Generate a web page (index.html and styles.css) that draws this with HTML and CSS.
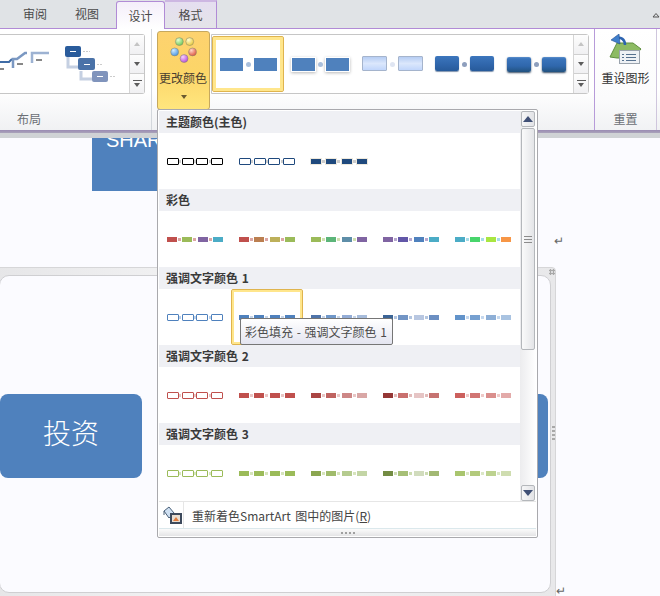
FILE: index.html
```html
<!DOCTYPE html>
<html lang="zh-CN">
<head>
<meta charset="utf-8">
<title>SmartArt 更改颜色</title>
<link rel="stylesheet" href="styles.css">
</head>
<body>
<div class="app">
  <nav class="tabs">
    <span class="tab">审阅</span>
    <span class="tab">视图</span>
    <span class="tab tab-active">设计</span>
    <span class="tab tab-context">格式</span>
    <svg class="collapse" width="8" height="6" viewBox="0 0 8 6"><path d="M1 5 L4 1.5 L7 5 Z" fill="none" stroke="#555"/></svg>
  </nav>

  <section class="ribbon">
    <div class="group group-layout">
      <div class="group-main">
        <div class="gallery gallery-layout">
          <svg class="layout-thumbs" width="129" height="58" viewBox="0 35 129 58">
            <path d="M0 62H9L12 59" fill="none" stroke="#3f6ca6" stroke-width="2"/>
            <path d="M13 68V59H17L25 53H27" fill="none" stroke="#7b98c2" stroke-width="2.5"/>
            <path d="M32 63V53H49" fill="none" stroke="#9db2d2" stroke-width="2.5"/>
            <path d="M0 69H4M17 64H23M36 60H42" stroke="#111" stroke-width="1"/>
            <path d="M68 57V67H78M81 71V79H92" fill="none" stroke="#c5d0e2" stroke-width="3"/>
            <rect class="lt-a" x="65" y="46" width="16" height="11" rx="2"/>
            <rect class="lt-b" x="78" y="58" width="17" height="12" rx="2"/>
            <rect class="lt-c" x="92" y="71" width="16" height="11" rx="2"/>
            <path d="M70 51.500H76M84 64.500H90M97 76.500H103" stroke="#fff" stroke-width="1"/>
            <path d="M83 51.500H90M97 64.500H102M110 76.500H116" stroke="#ccc" stroke-dasharray="2 1"/>
          </svg>
          <div class="spin">
            <span class="spin-btn"><i class="tri-up tri-off"></i></span>
            <span class="spin-btn"><i class="tri-down"></i></span>
            <span class="spin-btn spin-more"><i class="more-bar"></i><i class="tri-down"></i></span>
          </div>
        </div>
      </div>
      <div class="group-label">布局</div>
    </div>

    <div class="group group-style">
      <div class="group-main main-style">
        <button class="color-btn">
          <svg class="balls" width="34" height="34" viewBox="0 0 34 34">
            <defs>
              <radialGradient id="bg" cx=".35" cy=".3" r=".8"><stop offset="0" stop-color="#e6ffd0"/><stop offset="1" stop-color="#62c24a"/></radialGradient>
              <radialGradient id="by" cx=".35" cy=".3" r=".8"><stop offset="0" stop-color="#fffbd0"/><stop offset="1" stop-color="#e6c52e"/></radialGradient>
              <radialGradient id="bb" cx=".35" cy=".3" r=".8"><stop offset="0" stop-color="#d0ecff"/><stop offset="1" stop-color="#3d8ee0"/></radialGradient>
              <radialGradient id="br" cx=".35" cy=".3" r=".8"><stop offset="0" stop-color="#ffd6c8"/><stop offset="1" stop-color="#dd4a33"/></radialGradient>
              <radialGradient id="bm" cx=".35" cy=".3" r=".8"><stop offset="0" stop-color="#f6d0ff"/><stop offset="1" stop-color="#b13fd6"/></radialGradient>
            </defs>
            <circle cx="11" cy="7" r="4.200" fill="url(#bg)" stroke="#8a8a70" stroke-width=".6"/>
            <circle cx="22" cy="7" r="4.200" fill="url(#by)" stroke="#8a8a70" stroke-width=".6"/>
            <circle cx="6" cy="18" r="4.200" fill="url(#bb)" stroke="#8a8a70" stroke-width=".6"/>
            <circle cx="25" cy="18" r="4.200" fill="url(#br)" stroke="#8a8a70" stroke-width=".6"/>
            <circle cx="16" cy="25" r="4.200" fill="url(#bm)" stroke="#8a8a70" stroke-width=".6"/>
          </svg>
          <span class="btn-text">更改颜色</span>
          <i class="tri-down tri-dark"></i>
        </button>
        <div class="gallery gallery-style">
          <div class="style-cells">
            <div class="style-cell style-selected"><i class="tb t-flat"></i><b class="td"></b><i class="tb t-flat"></i></div>
            <div class="style-cell"><i class="tb t-raised"></i><b class="td"></b><i class="tb t-raised"></i></div>
            <div class="style-cell"><i class="tb t-light"></i><b class="td td-pale"></b><i class="tb t-light"></i></div>
            <div class="style-cell"><i class="tb t-dark"></i><b class="td td-mid"></b><i class="tb t-dark"></i></div>
            <div class="style-cell"><i class="tb t-deep"></i><b class="td td-mid"></b><i class="tb t-deep"></i></div>
          </div>
          <div class="spin">
            <span class="spin-btn"><i class="tri-up tri-off"></i></span>
            <span class="spin-btn"><i class="tri-down"></i></span>
            <span class="spin-btn spin-more"><i class="more-bar"></i><i class="tri-down"></i></span>
          </div>
        </div>
      </div>
      <div class="group-label"></div>
    </div>

    <div class="group group-reset">
      <div class="group-main main-reset">
        <svg class="reset-icon" width="36" height="32" viewBox="0 0 36 32">
          <path d="M2 23L9 9H25L33 15L25 24H9Z" fill="#8dbb63" stroke="#5f8f3e" stroke-linejoin="round"/>
          <rect x="11.500" y="16.500" width="20" height="13" fill="#eef1f5" stroke="#9aa3ad"/>
          <path d="M18 20.500H28M18 23.500H28M18 26.500H28M14 20.500H16M14 23.500H16M14 26.500H16" stroke="#56718f"/>
          <path d="M17 11C17 5 13 3 8 4" fill="none" stroke="#2c63b0" stroke-width="2.500"/>
          <path d="M3 6L11 0L12 10Z" fill="#3f7fcc" stroke="#234f90" stroke-width=".6"/>
        </svg>
        <span class="reset-text">重设图形</span>
      </div>
      <div class="group-label">重置</div>
    </div>
  </section>
  <div class="ribbon-edge"></div>

  <main class="doc">
    <div class="shape-top"><span>SHAR</span></div>
    <div class="para-mark para-left">↵</div>
    <div class="frame">
      <div class="frame-inner">
        <div class="node node-left">投资</div>
        <div class="node node-right"></div>
      </div>
      <i class="frame-corner"></i>
      <i class="frame-grip"></i>
    </div>
    <span class="mark mark-mid">↵</span>
    <span class="mark mark-low">↵</span>
  </main>

  <aside class="dropdown">
    <div class="dd-body">
      <div class="dd-list">
        <h4 class="dd-head">主题颜色(主色)</h4>
        <div class="dd-row">
          <div class="cell"><div class="sw out g-black"><i></i><b></b><i></i><b></b><i></i><b></b><i></i></div></div>
          <div class="cell"><div class="sw out g-navy"><i></i><b></b><i></i><b></b><i></i><b></b><i></i></div></div>
          <div class="cell"><div class="sw g-navyfill"><i></i><b></b><i></i><b></b><i></i><b></b><i></i></div></div>
        </div>
        <h4 class="dd-head">彩色</h4>
        <div class="dd-row">
          <div class="cell"><div class="sw g-c1"><i></i><b></b><i></i><b></b><i></i><b></b><i></i></div></div>
          <div class="cell"><div class="sw g-c2"><i></i><b></b><i></i><b></b><i></i><b></b><i></i></div></div>
          <div class="cell"><div class="sw g-c3"><i></i><b></b><i></i><b></b><i></i><b></b><i></i></div></div>
          <div class="cell"><div class="sw g-c4"><i></i><b></b><i></i><b></b><i></i><b></b><i></i></div></div>
          <div class="cell"><div class="sw g-c5"><i></i><b></b><i></i><b></b><i></i><b></b><i></i></div></div>
        </div>
        <h4 class="dd-head">强调文字颜色 1</h4>
        <div class="dd-row">
          <div class="cell"><div class="sw out g-b0"><i></i><b></b><i></i><b></b><i></i><b></b><i></i></div></div>
          <div class="cell cell-selected"><div class="sw g-b1"><i></i><b></b><i></i><b></b><i></i><b></b><i></i></div></div>
          <div class="cell"><div class="sw g-b2"><i></i><b></b><i></i><b></b><i></i><b></b><i></i></div></div>
          <div class="cell"><div class="sw g-b3"><i></i><b></b><i></i><b></b><i></i><b></b><i></i></div></div>
          <div class="cell"><div class="sw g-b4"><i></i><b></b><i></i><b></b><i></i><b></b><i></i></div></div>
        </div>
        <h4 class="dd-head">强调文字颜色 2</h4>
        <div class="dd-row">
          <div class="cell"><div class="sw out g-r0"><i></i><b></b><i></i><b></b><i></i><b></b><i></i></div></div>
          <div class="cell"><div class="sw g-r1"><i></i><b></b><i></i><b></b><i></i><b></b><i></i></div></div>
          <div class="cell"><div class="sw g-r2"><i></i><b></b><i></i><b></b><i></i><b></b><i></i></div></div>
          <div class="cell"><div class="sw g-r3"><i></i><b></b><i></i><b></b><i></i><b></b><i></i></div></div>
          <div class="cell"><div class="sw g-r4"><i></i><b></b><i></i><b></b><i></i><b></b><i></i></div></div>
        </div>
        <h4 class="dd-head">强调文字颜色 3</h4>
        <div class="dd-row">
          <div class="cell"><div class="sw out g-o0"><i></i><b></b><i></i><b></b><i></i><b></b><i></i></div></div>
          <div class="cell"><div class="sw g-o1"><i></i><b></b><i></i><b></b><i></i><b></b><i></i></div></div>
          <div class="cell"><div class="sw g-o2"><i></i><b></b><i></i><b></b><i></i><b></b><i></i></div></div>
          <div class="cell"><div class="sw g-o3"><i></i><b></b><i></i><b></b><i></i><b></b><i></i></div></div>
          <div class="cell"><div class="sw g-o4"><i></i><b></b><i></i><b></b><i></i><b></b><i></i></div></div>
        </div>
      </div>
      <div class="dd-scroll">
        <span class="sb-btn"><i class="sb-up"></i></span>
        <span class="sb-thumb"><i class="grip"></i></span>
        <span class="sb-track"></span>
        <span class="sb-btn"><i class="sb-down"></i></span>
      </div>
    </div>
    <div class="dd-foot">
      <span class="foot-icon">
        <svg width="20" height="20" viewBox="0 0 20 20">
          <path d="M2 6L7 2L12 8L7 13Z" fill="#cfe0f2" stroke="#4a6078"/>
          <path d="M2 6V10" stroke="#4a6078"/>
          <rect x="8" y="8" width="12" height="11" fill="#3d4a5c"/>
          <rect x="10" y="10" width="8" height="7" fill="#e8ddd0"/>
          <path d="M11 16L14 12L17 16Z" fill="#e07b3c"/>
        </svg>
      </span>
      <span class="foot-text">重新着色SmartArt 图中的图片(<u>R</u>)</span>
    </div>
    <div class="dd-grip"><i></i><i></i><i></i><i></i></div>
  </aside>

  <div class="tooltip">彩色填充 - 强调文字颜色 1</div>
</div>
</body>
</html>
```
FILE: styles.css
```css
* { box-sizing: border-box; }
html, body { margin: 0; padding: 0; }
body {
  width: 660px;
  height: 596px;
  overflow: hidden;
  font-family: "Noto Sans CJK SC", "Liberation Sans", sans-serif;
  font-size: 12px;
  color: #444;
  background: #fbfbff;
}
.app { position: relative; width: 660px; height: 596px; overflow: hidden; }

/* tabs */
.tabs {
  position: relative;
  display: flex;
  height: 29px;
  padding-left: 9px;
  background: #e0e3e6;
  border-bottom: 1px solid #b18bd6;
}
.tab {
  width: 52px;
  line-height: 28px;
  text-align: center;
  color: #4a4a4a;
}
.tab-active {
  width: 49px;
  margin-left: 3px;
  margin-top: 1px;
  margin-bottom: -1px;
  line-height: 27px;
  border: 1px solid #b18bd6;
  border-bottom: 0;
  border-radius: 3px 3px 0 0;
  background: linear-gradient(#f4eefa, #ffffff);
}
.tab-context {
  width: 52px;
  border-right: 1px solid #b18bd6;
  border-top: 2px solid #cdb7e2;
  line-height: 25px;
  background: linear-gradient(#e5def0, #e4e4e8);
}
.collapse { position: absolute; right: 0; top: 12px; }

/* ribbon */
.ribbon {
  display: flex;
  height: 101px;
  background: linear-gradient(#ffffff 0, #ffffff 60%, #f0f1f3 100%);
}
.ribbon-edge {
  height: 8px;
  background: linear-gradient(#9a8bb3 0, #a9a2b9 3px, #cfd2d5 3px, #cfd2d5 100%);
}
.group { display: flex; flex-direction: column; border-right: 1px solid #d3d7dc; }
.group-layout { width: 152px; }
.group-style { width: 443px; border-right-color: #b79bd9; }
.group-reset { width: 62px; border-right-color: #cfc6dd; }
.group-main { height: 79px; flex: none; }
.group-label {
  flex: 1;
  text-align: center;
  line-height: 22px;
  padding-top: 0;
  color: #6b6f75;
}
.group-layout .group-label { width: 58px; }
.gallery {
  display: flex;
  height: 60px;
  margin-top: 5px;
  background: #fff;
  border: 1px solid #c6c6c6;
  border-radius: 0 3px 3px 0;
}
.gallery-layout { width: 145px; border-left: 0; justify-content: space-between; }
.lt-a { fill: #2a5c9c; }
.lt-b { fill: #4a72a8; }
.lt-c { fill: #8094bc; }
.spin { display: flex; flex-direction: column; width: 15px; border-left: 1px solid #d5d5d5; }
.spin-btn {
  flex: 1;
  display: flex;
  flex-direction: column;
  align-items: center;
  justify-content: center;
  gap: 2px;
  background: linear-gradient(#fdfdfd, #f0f0f2);
  border-bottom: 1px solid #cfcfcf;
}
.spin-btn:last-child { border-bottom: 0; }
.tri-up, .tri-down { display: block; width: 0; height: 0; border-left: 3.500px solid transparent; border-right: 3.500px solid transparent; }
.tri-up { border-bottom: 4px solid #5c5c5c; }
.tri-off { border-bottom-color: #c4c4c4; }
.tri-down { border-top: 4px solid #5c5c5c; }
.more-bar { display: block; width: 9px; height: 1px; background: #5c5c5c; }

.main-style { display: flex; align-items: flex-start; padding-left: 5px; }
.color-btn {
  flex: none;
  display: flex;
  flex-direction: column;
  align-items: center;
  width: 53px;
  height: 79px;
  margin-top: 2px;
  padding: 3px 0 0;
  font: inherit;
  color: #4a4030;
  background: linear-gradient(#fdd26f 0, #fcd568 50%, #ffe67e 100%);
  border: 1px solid #c6a85e;
  border-radius: 3px;
}
.balls { display: block; margin-bottom: 0; margin-left: 2px; height: 32px; }
.btn-text { line-height: 18px; white-space: nowrap; margin-top: 2px; margin-left: -1px; }
.color-btn .tri-dark { margin-top: 8px; border-top-color: #6a5a30; }
.gallery-style { width: 378px; margin-left: 1px; border-left: 1px solid #c6c6c6; }
.style-cells { flex: 1; display: flex; }
.style-cell {
  position: relative;
  width: 72px;
  height: 56px;
  margin-top: 1px;
  flex: none;
  display: flex;
  align-items: center;
  justify-content: center;
  gap: 3px;
}
.style-selected { border: 1px solid #dfb44e; box-shadow: inset 0 0 0 3px #ffe68c; border-radius: 2px; }
.tb { display: block; width: 23px; height: 13px; background: #4f81bd; }
.td { display: block; width: 5px; height: 5px; border-radius: 50%; background: #a9bfdc; }
.td-pale { background: #dfe5f2; }
.td-mid { background: #8e9fbd; }
.t-raised { box-shadow: 0 0 0 1px #fff, 0 1px 3px 1px #b9b9b9; }
.t-light { background: linear-gradient(#b6cdf3, #dbe7fc 50%, #c1d6fb); border: 1px solid #a5b4cc; height: 15px; width: 25px; border-radius: 1px; margin-top: -1px; }
.t-dark { background: linear-gradient(#3c76bd, #2f65aa 60%, #275a9a); height: 15px; width: 24px; border-radius: 2px; box-shadow: 0 1px 1px #7f93ad; margin-top: -2px; }
.t-deep { background: linear-gradient(#5b8fcc 0, #3a74bb 12%, #2f67ac 60%, #22527f 100%); height: 15px; width: 24px; border-radius: 2px; box-shadow: 0 1px 2px #3c4f66; }

.main-reset { display: flex; flex-direction: column; align-items: center; padding-top: 5px; }
.reset-icon { display: block; }
.reset-text { line-height: 18px; margin-top: 3px; color: #333; }
.group-reset { background: linear-gradient(#ffffff 0, #fbfbfc 70%, #f1f2f4 100%); }

/* document */
.doc { position: relative; height: 458px; overflow: visible; }
.shape-top {
  width: 65px;
  height: 53px;
  margin-left: 92px;
  overflow: hidden;
  background: #4f81bd;
  color: #fff;
  font-family: "Liberation Sans", sans-serif;
  font-size: 20px;
  line-height: 20px;
  padding-left: 14px;
  white-space: nowrap;
}
.shape-top span { display: block; margin-top: -8px; }
.para-mark { height: 76px; padding-top: 57px; font-size: 11px; line-height: 12px; color: #777; margin-left: -8px; }
.frame {
  position: relative;
  width: 562px;
  height: 340px;
  margin-left: -6px;
  padding: 7px 4px 0;
  border: 1px solid #d6d6d8;
  border-radius: 4px;
  background: linear-gradient(90deg, #e6e6e8, #f4f4f5 40%, #e8e8ea);
}
.frame-inner {
  display: flex;
  justify-content: space-between;
  align-items: flex-start;
  height: 318px;
  padding-top: 118px;
  padding-right: 2px;
  background: #fbfbff;
  border: 1px solid #cfcfd2;
  border-radius: 10px;
}
.frame-corner {
  position: absolute;
  right: 0;
  top: 1px;
  width: 6px;
  height: 6px;
  background: radial-gradient(circle, #a8a8a8 1px, transparent 1.500px) 0 0 / 3px 3px;
}
.frame-grip {
  position: absolute;
  right: 0;
  top: 158px;
  width: 3px;
  height: 15px;
  background: repeating-linear-gradient(#a8a8a8 0, #a8a8a8 2px, transparent 2px, transparent 4px);
}
.node { height: 84px; background: #4f81bd; }
.node-left {
  width: 142px;
  border-radius: 8px;
  color: #fff;
  font-size: 28px;
  font-weight: 300;
  line-height: 76px;
  text-align: center;
}
.node-right { width: 40px; border-radius: 8px; }
.mark { position: absolute; color: #666; font-size: 12px; line-height: 12px; }
.mark-mid { left: 554px; top: 96px; }
.mark-low { left: 556px; top: 446px; }

/* dropdown */
.dropdown {
  position: absolute;
  left: 157px;
  top: 109px;
  display: flex;
  flex-direction: column;
  width: 381px;
  height: 429px;
  padding: 1px;
  background: #fff;
  border: 1px solid #a9a9ad;
  border-radius: 2px;
}
.dd-body { display: flex; height: 390px; flex: none; }
.dd-list { width: 361px; flex: none; }
.dd-head {
  height: 22px;
  margin: 0;
  padding-left: 7px;
  font-size: 12px;
  font-weight: 700;
  line-height: 22px;
  word-spacing: 1px;
  color: #3a3a3a;
  background: #eff0f4;
}
.dd-row { display: flex; height: 56px; }
.cell { width: 72px; height: 56px; flex: none; display: flex; align-items: center; justify-content: center; }
.cell-selected { border: 1px solid #dfb44e; box-shadow: inset 0 0 0 2px #ffe68c; border-radius: 2px; }
.sw { width: 56px; display: flex; align-items: center; justify-content: space-between; }
.sw i { display: block; width: 10px; height: 5px; }
.sw b { display: block; width: 3px; height: 3px; }
.sw i:nth-of-type(1) { background: var(--a); }
.sw i:nth-of-type(2) { background: var(--b); }
.sw i:nth-of-type(3) { background: var(--c); }
.sw i:nth-of-type(4) { background: var(--d); }
.sw b { background: var(--l, #ccc); }
.sw.out i { width: 12px; height: 7px; background: #fff; border: 1px solid var(--e); border-radius: 1px; }
.sw.out b { width: 2px; }
.g-black { --e: #000; --l: #ccc; }
.g-navy { --e: #1f497d; --l: #ccc; }
.g-navyfill { --a: #1f497d; --b: #1f497d; --c: #1f497d; --d: #1f497d; --l: #ccc; }
.g-navyfill i { outline: 1px solid #eee9dd; }
.g-c1 { --a: #c0504d; --b: #9bbb59; --c: #8064a2; --d: #4bacc6; --l: #dca6a4; }
.g-c2 { --a: #c0504d; --b: #bb7f50; --c: #bdb05a; --d: #9bbb59; --l: #dca6a4; }
.g-c3 { --a: #9bbb59; --b: #5cb579; --c: #5e8ea8; --d: #8064a2; --l: #cfe0b0; }
.g-c4 { --a: #8064a2; --b: #6257a8; --c: #4f81bd; --d: #4bacc6; --l: #b8a8d0; }
.g-c5 { --a: #4bacc6; --b: #48d56c; --c: #a9e641; --d: #f79646; --l: #a5dce8; }
.g-b0 { --e: #4f81bd; --l: #bcd0e8; }
.g-b1 { --a: #4f81bd; --b: #4f81bd; --c: #4f81bd; --d: #4f81bd; --l: #c5d4e8; }
.g-b2 { --a: #4f74aa; --b: #6f97c9; --c: #93acd6; --d: #a7bcdb; --l: #c5d4e8; }
.g-b3 { --a: #3b6496; --b: #7295c5; --c: #b8c7e1; --d: #6c8fc2; --l: #b4c6e0; }
.g-b4 { --a: #6293ca; --b: #76a0d0; --c: #8eafd6; --d: #a9c3e1; --l: #c5d8ee; }
.g-r0 { --e: #c0504d; --l: #e6c3c2; }
.g-r1 { --a: #c0504d; --b: #c0504d; --c: #c0504d; --d: #c0504d; --l: #e8c6c5; }
.g-r2 { --a: #aa4543; --b: #bf6360; --c: #cd8786; --d: #d9a7a6; --l: #e8c6c5; }
.g-r3 { --a: #953735; --b: #c9706e; --c: #e6c5c5; --d: #c67371; --l: #e2bcbb; }
.g-r4 { --a: #cc605d; --b: #d17573; --c: #da8f8d; --d: #e3aaa9; --l: #eec9c8; }
.g-o0 { --e: #9bbb59; --l: #d6e4bc; }
.g-o1 { --a: #9bbb59; --b: #9bbb59; --c: #9bbb59; --d: #9bbb59; --l: #d6e4bc; }
.g-o2 { --a: #8ba650; --b: #a0bb6b; --c: #b5cb8f; --d: #c3d5a5; --l: #d6e4bc; }
.g-o3 { --a: #738c43; --b: #a6bf76; --c: #d1dcbd; --d: #a2b873; --l: #cddcb2; }
.g-o4 { --a: #a9c56e; --b: #b3ca7c; --c: #bdd28f; --d: #cfddb0; --l: #dbe7c6; }

.dd-scroll {
  flex: 1;
  display: flex;
  flex-direction: column;
  padding: 0 1px;
  gap: 1px;
  background: linear-gradient(90deg, #ececee, #ffffff);
}
.sb-btn {
  flex: none;
  height: 16px;
  display: flex;
  align-items: center;
  justify-content: center;
  border: 1px solid #b4b7bb;
  border-radius: 2px;
  background: linear-gradient(90deg, #f6f6f7, #e2e3e6);
}
.sb-up, .sb-down { display: block; width: 0; height: 0; border-left: 5px solid transparent; border-right: 5px solid transparent; }
.sb-up { border-bottom: 6px solid #3f4f75; }
.sb-down { border-top: 6px solid #3f4f75; }
.sb-thumb {
  flex: none;
  height: 222px;
  display: flex;
  align-items: center;
  justify-content: center;
  border: 1px solid #b4b7bb;
  border-radius: 2px;
  background: linear-gradient(90deg, #fafafa, #e4e5e8);
}
.grip { display: block; width: 8px; height: 7px; background: repeating-linear-gradient(#8c8c8c 0, #8c8c8c 1px, transparent 1px, transparent 3px); }
.sb-track { flex: 1; }
.dd-foot {
  flex: none;
  display: flex;
  align-items: center;
  height: 28px;
  margin-top: 0;
  border-top: 1px solid #e6e6e6;
  border-bottom: 1px solid #dbe8ec;
}
.foot-icon { display: flex; align-items: center; width: 25px; height: 100%; padding-left: 3px; border-right: 1px solid #e6e6e6; }
.foot-text { margin-left: 8px; color: #444; white-space: nowrap; word-spacing: 2px; }
.dd-grip {
  flex: 1;
  display: flex;
  align-items: center;
  justify-content: center;
  gap: 2px;
  background: linear-gradient(#fbfbfb, #e4e4e6);
}
.dd-grip i { display: block; width: 2px; height: 2px; background: #a0a0a0; }

/* tooltip */
.tooltip {
  position: absolute;
  left: 240px;
  top: 318px;
  width: 153px;
  height: 27px;
  padding-left: 4px;
  line-height: 25px;
  white-space: nowrap;
  word-spacing: 1px;
  color: #4c4c4c;
  border: 1px solid #767676;
  border-radius: 2px;
  background: linear-gradient(#ffffff, #e4e5f0);
}
```
